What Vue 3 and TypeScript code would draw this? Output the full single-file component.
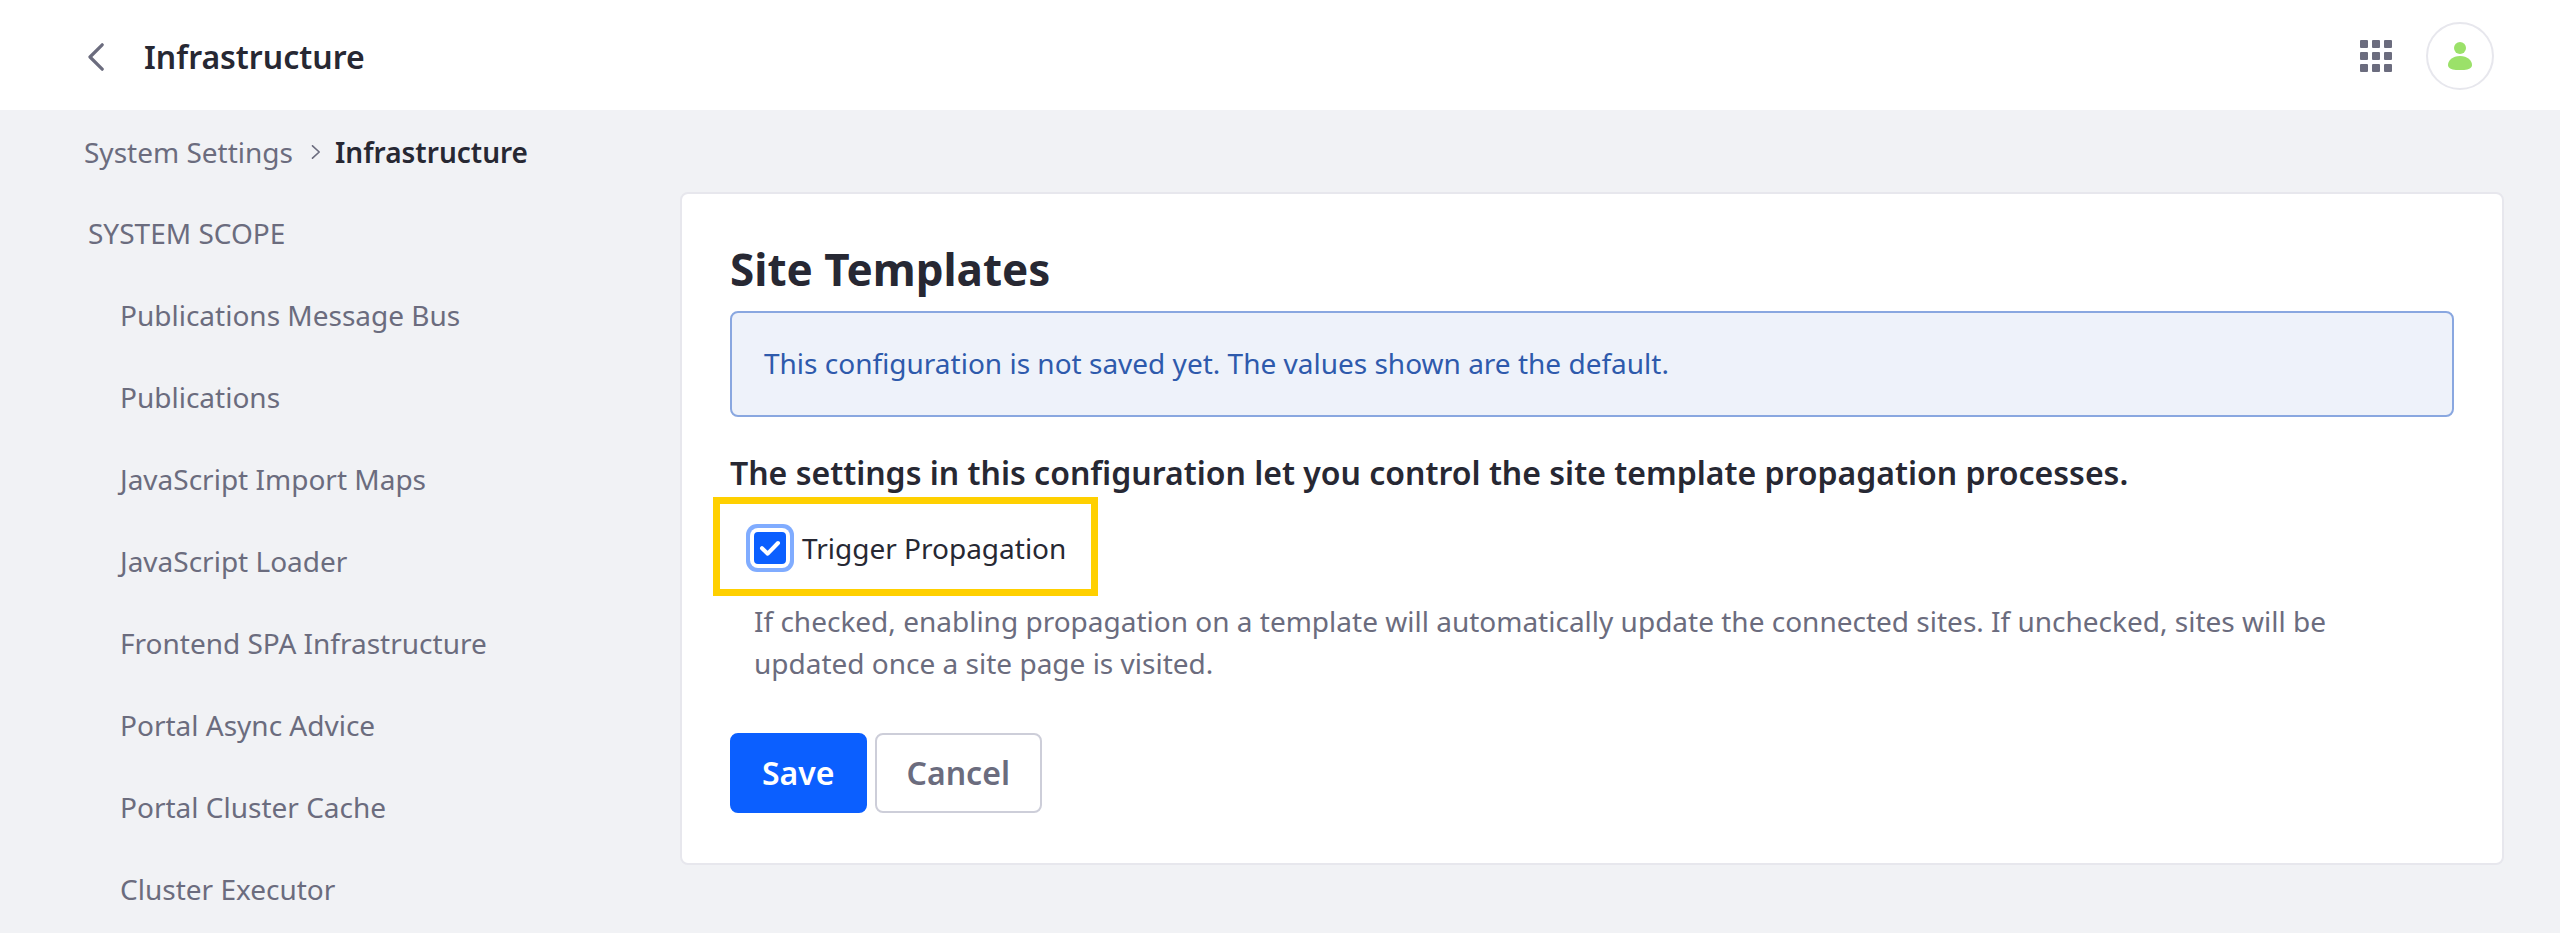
<script setup lang="ts">
import { ref } from 'vue'

interface NavItem {
  id: string
  label: string
}

const navItems: NavItem[] = [
  { id: 'publications-message-bus', label: 'Publications Message Bus' },
  { id: 'publications', label: 'Publications' },
  { id: 'javascript-import-maps', label: 'JavaScript Import Maps' },
  { id: 'javascript-loader', label: 'JavaScript Loader' },
  { id: 'frontend-spa-infrastructure', label: 'Frontend SPA Infrastructure' },
  { id: 'portal-async-advice', label: 'Portal Async Advice' },
  { id: 'portal-cluster-cache', label: 'Portal Cluster Cache' },
  { id: 'cluster-executor', label: 'Cluster Executor' },
]

const gridOffsets: number[] = [0, 12, 24]
const triggerPropagation = ref<boolean>(true)
</script>

<template>
  <div class="page">
    <header class="topbar">
      <div class="heading">
        <a class="back" href="#back" aria-label="Back">
          <svg width="16" height="28" viewBox="0 0 16 28" fill="none">
            <path d="M14.2 1.8 2 14 14.2 26.2" stroke="currentColor" stroke-width="3.2" stroke-linecap="round" stroke-linejoin="round" />
          </svg>
        </a>
        <h1 class="topbar-title">Infrastructure</h1>
      </div>
      <button class="apps" type="button" aria-label="Applications">
        <svg width="32" height="32" viewBox="0 0 32 32" fill="currentColor">
          <template v-for="y in gridOffsets" :key="y">
            <rect v-for="x in gridOffsets" :key="x" :x="x" :y="y" width="8" height="8" rx="1" />
          </template>
        </svg>
      </button>
      <button class="avatar" type="button" aria-label="User profile">
        <svg width="24" height="28" viewBox="0 0 24 28" fill="currentColor">
          <circle cx="12" cy="6" r="6" />
          <path d="M12 14C4.5 14 0 18.5 0 23c0 3.6 5 5.2 12 5.2S24 26.6 24 23c0-4.5-4.5-9-12-9Z" />
        </svg>
      </button>
    </header>

    <nav class="breadcrumb" aria-label="Breadcrumb">
      <a href="#system-settings">System Settings</a>
      <svg width="10" height="14" viewBox="0 0 10 14" fill="none">
        <path d="M1.5 0.8 8.2 7 1.5 13.2" stroke="currentColor" stroke-width="1.6" stroke-linecap="round" stroke-linejoin="round" />
      </svg>
      <span class="current" aria-current="page">Infrastructure</span>
    </nav>

    <div class="body">
      <aside class="sidebar">
        <h2 class="scope">SYSTEM SCOPE</h2>
        <ul class="nav">
          <li v-for="item in navItems" :key="item.id">
            <a :href="'#' + item.id">{{ item.label }}</a>
          </li>
        </ul>
      </aside>

      <main class="sheet">
        <h2 class="sheet-title">Site Templates</h2>
        <div class="alert" role="status">
          This configuration is not saved yet. The values shown are the default.
        </div>
        <h3 class="sheet-text">
          The settings in this configuration let you control the site template propagation processes.
        </h3>
        <form @submit.prevent>
          <div class="field">
            <span class="check">
              <input id="trigger-propagation" v-model="triggerPropagation" type="checkbox" aria-describedby="trigger-help" />
              <svg v-if="triggerPropagation" width="32" height="32" viewBox="0 0 32 32" fill="none">
                <path d="M8 16.2 13.7 21.7 24 11" stroke="#fff" stroke-width="4" stroke-linecap="round" stroke-linejoin="round" />
              </svg>
            </span>
            <label for="trigger-propagation">Trigger Propagation</label>
          </div>
          <p id="trigger-help" class="help">
            If checked, enabling propagation on a template will automatically update the connected sites. If unchecked, sites will be updated once a site page is visited.
          </p>
          <div class="actions">
            <button class="btn primary" type="submit">Save</button>
            <button class="btn secondary" type="button">Cancel</button>
          </div>
        </form>
      </main>
    </div>
  </div>
</template>

<style>
body {
  margin: 0;
  background: #f1f2f5;
}
</style>

<style scoped>
.page,
.page * {
  box-sizing: border-box;
}

.page {
  min-height: 100vh;
  background: #f1f2f5;
  color: #272833;
  font-family: "Noto Sans", sans-serif;
  font-size: 28px;
  line-height: 42px;
}

h1,
h2,
h3,
p,
ul {
  margin: 0;
  padding: 0;
}

a {
  color: #6b6c7e;
  text-decoration: none;
}

button {
  font-family: inherit;
  cursor: pointer;
}

svg {
  display: block;
}

.topbar {
  display: flex;
  align-items: center;
  height: 110px;
  padding: 2px 66px 0 88px;
  background: #fff;
}

.heading {
  display: flex;
  align-items: center;
  gap: 40px;
  margin-right: auto;
  padding-top: 2px;
}

.topbar-title {
  font-size: 32px;
  line-height: 48px;
  font-weight: 600;
}

.apps {
  padding: 0;
  border: 0;
  background: none;
  color: #6b6c7e;
}

.avatar {
  display: flex;
  align-items: center;
  justify-content: center;
  width: 68px;
  height: 68px;
  margin-left: 34px;
  padding: 0;
  border: 2px solid #e7e7ed;
  border-radius: 50%;
  background: #fff;
  color: #9be169;
}

.breadcrumb {
  display: flex;
  align-items: center;
  padding: 21px 84px 19px;
  color: #6b6c7e;
}

.breadcrumb svg {
  margin: 0 14px 0 18px;
}

.current {
  color: #272833;
  font-weight: 600;
}

.body {
  display: flex;
  align-items: flex-start;
  padding: 0 56px 0 84px;
}

.sidebar {
  flex: 0 0 596px;
  padding: 20px 0 0 4px;
}

.scope {
  color: #6b6c7e;
  font-size: 28px;
  font-weight: 400;
}

.nav {
  list-style: none;
  padding-left: 32px;
}

.nav li {
  padding-top: 40px;
}

.sheet {
  flex: 1;
  min-width: 0;
  padding: 48px 48px 50px;
  border: 2px solid #e7e7ed;
  border-radius: 8px;
  background: #fff;
}

.sheet-title {
  font-size: 44px;
  line-height: 54px;
  font-weight: 700;
}

.alert {
  margin-top: 15px;
  padding: 29px 32px 31px;
  border: 2px solid #89a7e0;
  border-radius: 8px;
  background: #eef2fa;
  color: #2e5aac;
}

.sheet-text {
  margin-top: 32px;
  font-size: 32px;
  line-height: 48px;
  font-weight: 600;
}

.field {
  position: relative;
  display: flex;
  align-items: center;
  width: max-content;
  margin: 30px 0 0 24px;
}

/* Highlight frame drawn around the option */
.field::after {
  content: "";
  position: absolute;
  inset: -30px -32px -27px -41px;
  border: 7px solid #ffd000;
  pointer-events: none;
}

.check {
  display: grid;
  margin-right: 16px;
}

.check input,
.check svg {
  grid-area: 1 / 1;
}

.check svg {
  pointer-events: none;
}

.check input {
  appearance: none;
  width: 32px;
  height: 32px;
  margin: 0;
  border: 2px solid #cdced9;
  border-radius: 4px;
  background: #fff;
  box-shadow: 0 0 0 4px #fff, 0 0 0 8px #80acff;
}

.check input:checked {
  border-color: #0b5fff;
  background: #0b5fff;
}

.help {
  margin: 31px 24px 0;
  color: #6b6c7e;
}

.actions {
  display: flex;
  gap: 8px;
  margin-top: 49px;
}

.btn {
  height: 80px;
  padding: 0 30px;
  border: 2px solid #0b5fff;
  border-radius: 8px;
  font-size: 32px;
  line-height: 48px;
  font-weight: 600;
}

.primary {
  background: #0b5fff;
  color: #fff;
}

.secondary {
  border-color: #cdced9;
  background: #fff;
  color: #6b6c7e;
}
</style>
